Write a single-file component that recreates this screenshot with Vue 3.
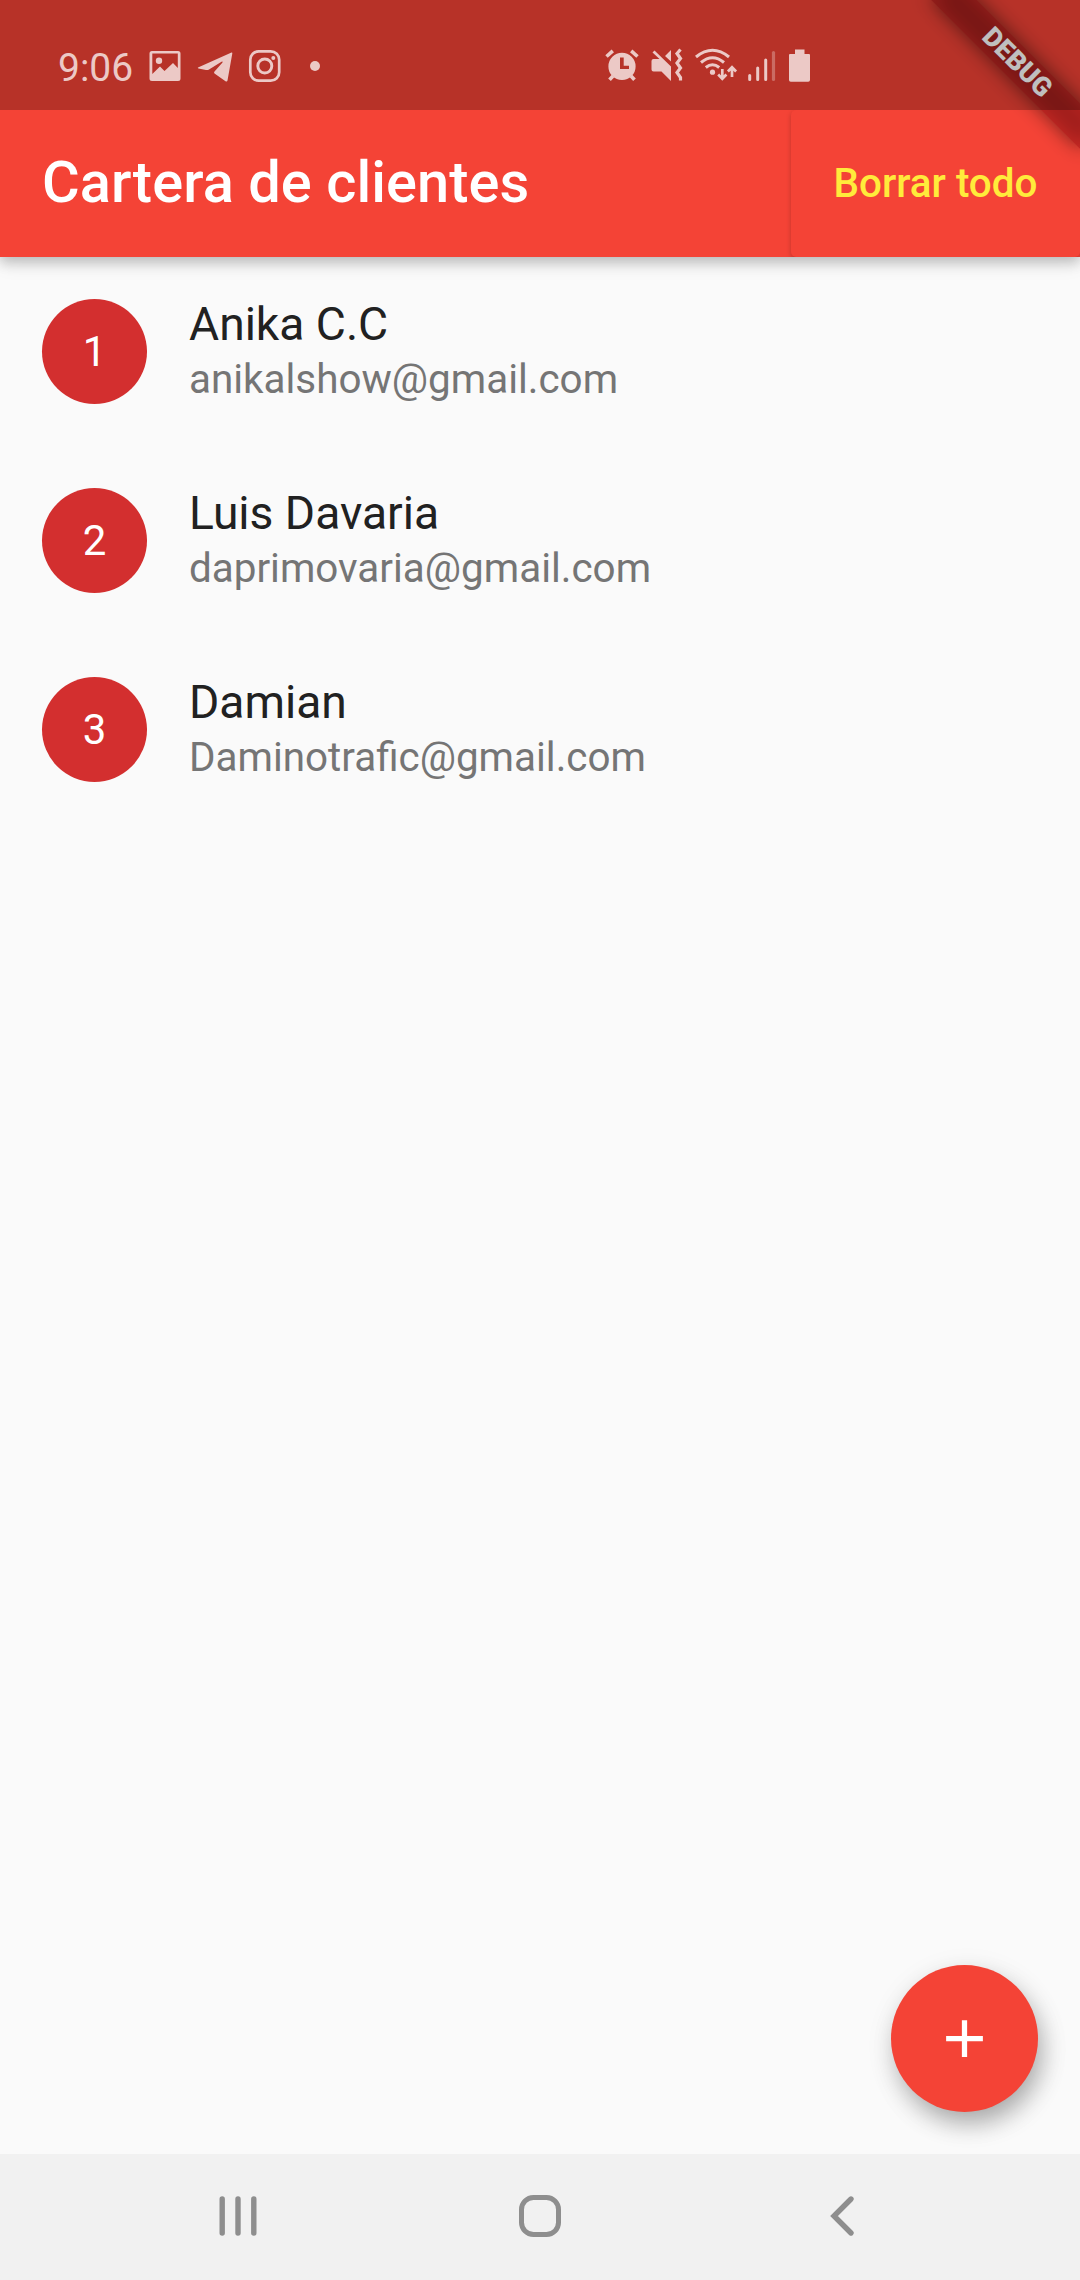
<script setup>
const clients = [
  { id: 1, name: 'Anika C.C', email: 'anikalshow@gmail.com' },
  { id: 2, name: 'Luis Davaria', email: 'daprimovaria@gmail.com' },
  { id: 3, name: 'Damian', email: 'Daminotrafic@gmail.com' },
]
</script>

<template>
  <div class="screen">
    <header class="appbar">
      <h1 class="title">Cartera de clientes</h1>
      <div class="actions">
        <button class="clear">Borrar todo</button>
      </div>
    </header>

    <main class="list">
      <div v-for="c in clients" :key="c.id" class="row">
        <div class="avatar">{{ c.id }}</div>
        <div class="info">
          <div class="name">{{ c.name }}</div>
          <div class="email">{{ c.email }}</div>
        </div>
      </div>
    </main>

    <button class="fab" aria-label="+">
      <svg width="63" height="63" viewBox="0 0 24 24"><path d="M19 13h-6v6h-2v-6H5v-2h6V5h2v6h6v2z" fill="#fff" /></svg>
    </button>

    <nav class="navbar">
      <svg class="nav-icon" width="60" height="60" viewBox="0 0 60 60">
        <path d="M14.2 13v34M30 13v34M45.8 13v34" stroke="#8e8e8e" stroke-width="5.4" stroke-linecap="round" />
      </svg>
      <svg class="nav-icon" width="60" height="60" viewBox="0 0 60 60">
        <rect x="11.5" y="11.5" width="37" height="37" rx="12" fill="none" stroke="#8e8e8e" stroke-width="5" />
      </svg>
      <svg class="nav-icon" width="60" height="60" viewBox="0 0 60 60">
        <path d="M39 13L22 30L39 47" fill="none" stroke="#8e8e8e" stroke-width="5.4" stroke-linecap="round" />
      </svg>
    </nav>

    <div class="ribbon-clip">
      <div class="ribbon">
        <div class="ribbon-shadow"></div>
        <div class="ribbon-band">DEBUG</div>
      </div>
    </div>

    <div class="status">
      <span class="clock">9:06</span>
      <svg class="left-icons" width="176" height="40" viewBox="0 0 176 40">
        <!-- picture -->
        <path fill-rule="evenodd" d="M3 6h26a2.500 2.500 0 0 1 2.500 2.500v25a2.500 2.500 0 0 1-2.500 2.500H3A2.500 2.500 0 0 1 .5 33.500v-25A2.500 2.500 0 0 1 3 6zM3.300 8.600V29L11 21.500L15.500 26L24 18L28.800 23V8.600z" />
        <circle cx="10" cy="15.800" r="3.200" />
        <!-- paper plane -->
        <path d="M49 22.500L82.500 7.500Q83.500 7.200 83.300 8.500L78.500 35.500Q78 37.200 76.500 36.200L65.500 28.500Q64.500 27.500 65.500 26.500L73.500 17.500Q74 16 72.500 16.800L60 24.500Q58.500 25.300 57 24.900L49.500 23.500Q48.300 23 49 22.500z" />
        <!-- camera -->
        <g fill="none" stroke="#ecc9c6">
          <rect x="101.300" y="6.300" width="28.900" height="29.400" rx="8.500" stroke-width="2.700" />
          <circle cx="115.800" cy="21" r="7" stroke-width="2.900" />
        </g>
        <circle cx="124.300" cy="13" r="2" />
        <circle cx="166" cy="21" r="5" />
      </svg>
      <svg class="right-icons" width="220" height="40" viewBox="0 0 220 40">
        <!-- alarm -->
        <path fill-rule="evenodd" d="M22 7.800a13.400 13.400 0 1 1 0 27.200a13.400 13.400 0 1 1 0-27.200zM20 12.500V24H29V20.700H23.700V12.500z" />
        <path d="M6.500 11.500L12.800 5.900M37.500 11.500L31.200 5.900M9.500 34.800L13 31M34.500 34.800L31 31" stroke="#ecc9c6" stroke-width="3.600" />
        <!-- muted + vibrate -->
        <path d="M51.500 16Q51.500 14 53.500 14H59.500L52.500 7.500L54.500 5.500L71 21.500V36L61.500 26.500H53.500Q51.500 26.500 51.500 24.500zM71 5V16.500L65 11z" />
        <path d="M81 5L77.500 9L81 14L77.500 18.500L81 23.500L77.500 28L81 33V36" transform="translate(-.5 -.5)" fill="none" stroke="#ecc9c6" stroke-width="3.200" />
        <!-- wifi -->
        <g fill="none" stroke="#ecc9c6" stroke-width="3.100">
          <path d="M96 12Q112.500-1.500 129 12M101 17.500Q112.500 8 124 17.500M105.800 22.500Q112.500 17 119.200 22.500" />
          <path d="M122.300 24v9M118.200 29.500L122.300 33.700L126.400 29.500M132 32V23M127.900 26.500L132 22.300L136.100 26.500" stroke-width="2.700" />
        </g>
        <circle cx="112.500" cy="27.200" r="2.600" />
        <!-- signal -->
        <path d="M149.700 30.500v4M157.700 23v11.500M165.700 15v19.500" stroke="#ecc9c6" stroke-width="3" stroke-linecap="round" />
        <path d="M173.500 7.500v27" stroke="#ecc9c6" stroke-opacity=".38" stroke-width="3.200" stroke-linecap="round" />
        <!-- battery -->
        <path d="M195 4.500h9.500v4.500H209q1 0 1 1v25q0 1.800-1.800 1.800H190.800q-1.800 0-1.800-1.800V10q0-1 1-1h5z" />
      </svg>
    </div>
  </div>
</template>

<style>
body { margin: 0; }
</style>

<style scoped>
.screen {
  position: relative;
  display: flex;
  flex-direction: column;
  width: 1080px;
  height: 2280px;
  overflow: hidden;
  background: #fafafa;
  font-family: Roboto, sans-serif;
}
button { border: 0; padding: 0; margin: 0; font-family: inherit; }
.appbar {
  position: relative;
  display: flex;
  justify-content: space-between;
  height: 147px;
  padding-top: 110px;
  background: #f44336;
  box-shadow: 0 5px 12px rgba(0, 0, 0, .2), 0 7px 18px rgba(0, 0, 0, .09);
}
.title {
  margin: 0 0 0 42px;
  color: #fff;
  font-size: 57.75px;
  line-height: 144px;
  font-weight: 500;
  letter-spacing: .07px;
}
.actions {
  height: 147px;
  padding-left: 8px;
  overflow: hidden;
}
.clear {
  display: block;
  width: 289px;
  height: 147px;
  border-radius: 5px;
  background: #f44336;
  box-shadow: 0 2px 5px rgba(0, 0, 0, .22);
  color: #ffeb3b;
  font-size: 40.4px;
  font-weight: 500;
  white-space: nowrap;
}
.list { flex: 1; }
.row {
  display: flex;
  align-items: center;
  gap: 42px;
  height: 189px;
  padding-left: 42px;
}
.avatar {
  width: 105px;
  height: 105px;
  border-radius: 50%;
  background: #d32f2f;
  color: #fff;
  font-size: 42px;
  line-height: 105px;
  text-align: center;
}
.name { font-size: 46.2px; line-height: 56px; color: #212121; }
.email { font-size: 40.4px; line-height: 56px; color: #757575; }
.fab {
  position: absolute;
  right: 42px;
  bottom: 168px;
  width: 147px;
  height: 147px;
  display: flex;
  align-items: center;
  justify-content: center;
  border-radius: 50%;
  background: #f44336;
  box-shadow: 5px 13px 24px -2px rgba(0, 0, 0, .27), 3px 8px 30px rgba(0, 0, 0, .1);
}
.navbar {
  position: relative;
  display: flex;
  justify-content: space-between;
  align-items: center;
  height: 126px;
  padding: 0 208px 2px;
  box-sizing: border-box;
  background: #f1f1f1;
}
.nav-icon { display: block; }
.ribbon-clip {
  position: absolute;
  top: 0;
  right: 0;
  width: 260px;
  height: 260px;
  overflow: hidden;
}
.ribbon {
  position: absolute;
  left: 92px;
  top: 47.4px;
  width: 210px;
  height: 31.5px;
  transform: rotate(45deg);
}
.ribbon-shadow {
  position: absolute;
  inset: 0;
  background: rgba(0, 0, 0, .5);
  filter: blur(9.6px);
}
.ribbon-band {
  position: relative;
  height: 31.5px;
  background: rgba(183, 28, 28, .63);
  color: #fff;
  font-size: 26.8px;
  font-weight: 900;
  line-height: 31.5px;
  text-align: center;
}
.status {
  position: absolute;
  top: 0;
  left: 0;
  width: 1080px;
  height: 110px;
  display: flex;
  align-items: flex-start;
  box-sizing: border-box;
  padding: 45px 0 0 58px;
  background: rgba(0, 0, 0, .25);
}
.status svg { fill: #ecc9c6; }
.clock {
  width: 91px;
  color: #ecc9c6;
  font-size: 39px;
  line-height: 46px;
}
.right-icons { margin-left: 275px; }
</style>
